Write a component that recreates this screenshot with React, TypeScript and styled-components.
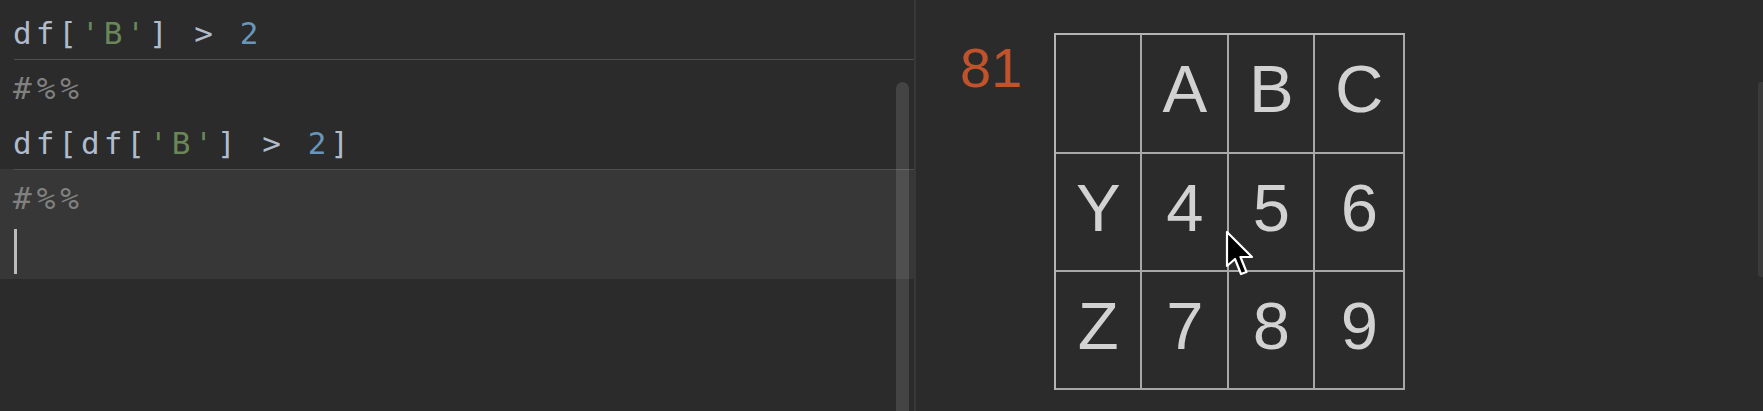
import styled, { createGlobalStyle } from 'styled-components'

const GlobalStyle = createGlobalStyle`
  html, body {
    margin: 0;
    padding: 0;
    background: #2b2b2b;
  }
`

const Wrapper = styled.div`
  display: flex;
  width: 1763px;
  height: 411px;
  overflow: hidden;
  background: #2b2b2b;
`

const EditorPane = styled.div`
  position: relative;
  width: 916px;
  flex-shrink: 0;
  padding-top: 4px;
  box-sizing: border-box;
  border-right: 2px solid #383838;
  font-family: 'DejaVu Sans Mono', monospace;
  font-size: 31px;
  letter-spacing: 4px;
  color: #b0bccb;
`

const Cell = styled.div<{ $active?: boolean }>`
  background: ${(p) => (p.$active ? '#373737' : 'transparent')};
`

const Divider = styled.div`
  height: 1px;
  margin-left: 14px;
  margin-bottom: -1px;
  background: #4f4f4f;
`

const Line = styled.div`
  height: 55px;
  box-sizing: border-box;
  padding: 3px 0 0 13px;
  line-height: 52px;
  white-space: pre;
`

const CaretLine = styled.div`
  height: 55px;
  display: flex;
  align-items: center;
  padding-left: 14px;
`

const Caret = styled.span`
  width: 3px;
  height: 45px;
  background: #bbbbbb;
`

const Str = styled.span`
  color: #6a8759;
`

const Num = styled.span`
  color: #6897bb;
`

const Comment = styled.span`
  color: #808080;
  letter-spacing: 5px;
`

const Thumb = styled.div`
  position: absolute;
  right: 5px;
  top: 82px;
  width: 13px;
  height: 360px;
  border-radius: 7px;
  background: rgba(255, 255, 255, 0.12);
`

const OutputPane = styled.div`
  position: relative;
  flex: 1;
  display: flex;
  align-items: flex-start;
  gap: 32px;
  padding: 33px 0 0 44px;
`

const Prompt = styled.span`
  margin-top: 7px;
  font-family: 'Liberation Sans', Arial, sans-serif;
  font-size: 56px;
  line-height: 1;
  color: #c0532c;
`

const Table = styled.table`
  border-collapse: separate;
  border-spacing: 0;
  border-top: 2px solid #b4b4b4;
  border-left: 2px solid #b4b4b4;
  font-family: 'Liberation Sans', Arial, sans-serif;
  font-size: 67px;
  color: #d2d2d2;
`

const Td = styled.td<{ $w: number; $h: number }>`
  width: ${(p) => p.$w}px;
  height: ${(p) => p.$h}px;
  padding: 0 0 10px 0;
  text-align: center;
  vertical-align: middle;
  border-right: 2px solid #a8a8a8;
  border-bottom: 2px solid #a8a8a8;
`

const SideScroll = styled.div`
  position: absolute;
  right: 0;
  top: 82px;
  width: 5px;
  height: 195px;
  border-radius: 3px 0 0 3px;
  background: #3a3a3a;
`

const Pointer = styled.svg`
  position: absolute;
  left: 309px;
  top: 230px;
`

const widths = [84, 85, 84, 88]
const heights = [107, 106, 106]
const rows = [
  ['', 'A', 'B', 'C'],
  ['Y', '4', '5', '6'],
  ['Z', '7', '8', '9'],
]

const App = () => {
  return (
    <>
      <GlobalStyle />
      <Wrapper>
        <EditorPane>
          <Cell>
            <Line>
              df[<Str>'B'</Str>] &gt; <Num>2</Num>
            </Line>
          </Cell>
          <Cell>
            <Divider />
            <Line>
              <Comment>#%%</Comment>
            </Line>
            <Line>
              df[df[<Str>'B'</Str>] &gt; <Num>2</Num>]
            </Line>
          </Cell>
          <Cell $active>
            <Divider />
            <Line>
              <Comment>#%%</Comment>
            </Line>
            <CaretLine>
              <Caret />
            </CaretLine>
          </Cell>
          <Thumb />
        </EditorPane>
        <OutputPane>
          <Prompt>81</Prompt>
          <Table>
            <tbody>
              {rows.map((row, r) => (
                <tr key={r}>
                  {row.map((v, c) => (
                    <Td key={c} $w={widths[c]} $h={heights[r]}>
                      {v}
                    </Td>
                  ))}
                </tr>
              ))}
            </tbody>
          </Table>
          <SideScroll />
          <Pointer width='30' height='46' viewBox='-2 -2 30 46'>
            <path
              d='M0 0 L0 34 L8 27 L14 42 L19.5 40 L13.5 25 L25 25 Z'
              fill='#000'
              stroke='#fff'
              strokeWidth='2.2'
              strokeLinejoin='round'
            />
          </Pointer>
        </OutputPane>
      </Wrapper>
    </>
  )
}

export default App
